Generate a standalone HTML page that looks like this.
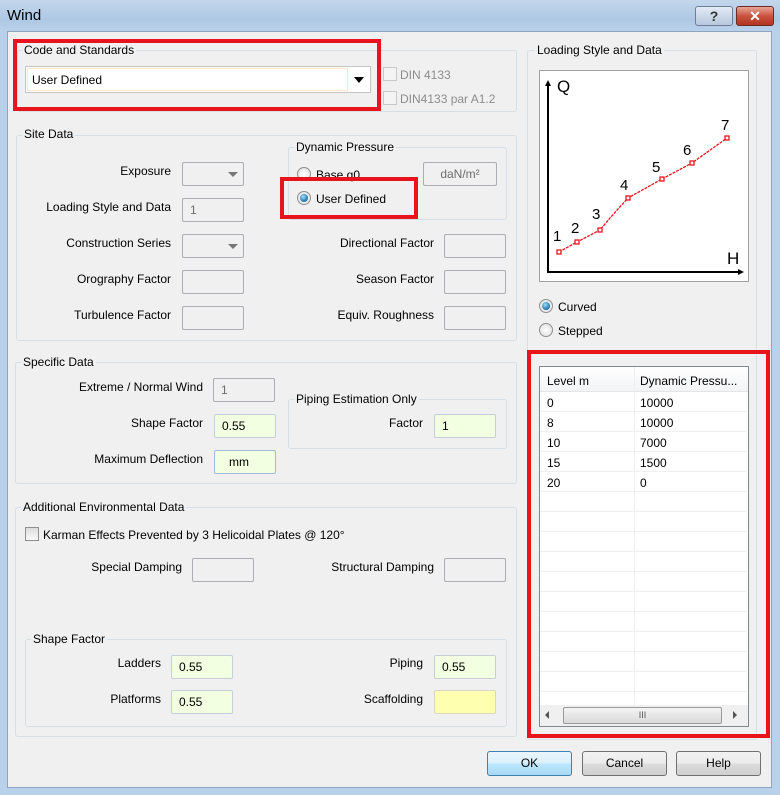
<!DOCTYPE html><html><head><style>
*{box-sizing:border-box;margin:0;padding:0}
body{width:780px;height:795px;overflow:hidden;font-family:"Liberation Sans",sans-serif;font-size:12px;color:#000;position:relative;background:#b9d1ea}
.a{position:absolute}
.win{left:7px;top:31px;width:765px;height:757px;background:#f0f0f0;border:1px solid #8ca5c0}
.title{left:0;top:0;width:780px;height:32px;background:linear-gradient(#c4d7ec,#aec8e4 60%,#bad1ea)}
.g{position:absolute;border:1px solid #d5dfe5;border-radius:3px}
.gl{position:absolute;background:#f0f0f0;padding:0 2px;white-space:nowrap}
.lb{position:absolute;white-space:nowrap;text-align:right}
.in{position:absolute;height:24px;width:62px;border:1px solid #abadb3;background:#f0f0f0;border-radius:2px;padding:4px 7px;color:#6d6d6d}
.gr{background:#f2ffe0;color:#000;border-color:#c5cfd8}
.red{position:absolute;border:4px solid #e8141c}
.btn{position:absolute;height:25px;width:85px;border:1px solid #707070;border-radius:3px;background:linear-gradient(#f2f2f2,#ebebeb 50%,#dddddd 51%,#cfcfcf);text-align:center;line-height:23px}
.rad{position:absolute;width:14px;height:14px;border-radius:50%;border:1px solid #8e8f8f;background:radial-gradient(#fff,#dcdcdc)}
.rad.on::after{content:"";position:absolute;left:2px;top:2px;width:8px;height:8px;border-radius:50%;background:radial-gradient(circle at 40% 35%,#9fe0ff,#1a6fa8 70%,#0a3e66)}
.cb{position:absolute;width:14px;height:14px;border:1px solid #8e8f8f;background:linear-gradient(#dcdcdc,#fafafa)}
.row{position:absolute;left:0;width:206px;height:20px;border-bottom:1px solid #f0f0f0}
</style></head><body>
<div class="a title"></div>
<div class="a" style="left:7px;top:7px;font-size:15px">Wind</div>
<div class="a" style="left:695px;top:6px;width:38px;height:20px;border:1px solid #6d7f95;border-radius:3px;background:linear-gradient(#e3ebf5,#b6c8dd);text-align:center;font-weight:bold;color:#333;font-size:14px;line-height:18px">?</div>
<div class="a" style="left:736px;top:6px;width:38px;height:20px;border:1px solid #6b2a22;border-radius:3px;background:linear-gradient(#e8a698,#c9543f 50%,#b33520);text-align:center;font-weight:bold;color:#fff;font-size:14px;line-height:18px">✕</div>
<div class="a win"></div>

<!-- Code and standards -->
<div class="g" style="left:17px;top:50px;width:500px;height:62px"></div>
<div class="gl" style="left:22px;top:43px">Code and Standards</div>
<div class="a" style="left:25px;top:66px;width:346px;height:27px;border:1px solid #c5c5c5;background:#fff"><div class="a" style="left:1px;top:1px;width:321px;height:23px;border:1px solid #fde6cc"></div><div class="a" style="left:6px;top:6px">User Defined</div><div class="a" style="left:328px;top:10px;border:5px solid transparent;border-top:6px solid #000"></div></div>
<div class="cb" style="left:383px;top:67px;background:#f4f4f4;border-color:#c8c8c8"></div><div class="a" style="left:400px;top:68px;color:#8d8d8d">DIN 4133</div>
<div class="cb" style="left:383px;top:91px;background:#f4f4f4;border-color:#c8c8c8"></div><div class="a" style="left:400px;top:92px;color:#8d8d8d">DIN4133 par A1.2</div>
<div class="red" style="left:13px;top:39px;width:368px;height:72px"></div>

<!-- Site data -->
<div class="g" style="left:16px;top:135px;width:501px;height:206px"></div>
<div class="gl" style="left:22px;top:127px">Site Data</div>
<div class="lb" style="right:609px;top:164px">Exposure</div>
<div class="in" style="left:182px;top:162px"><div class="a" style="left:45px;top:9px;border:5px solid transparent;border-top:5px solid #777"></div></div>
<div class="lb" style="right:609px;top:200px">Loading Style and Data</div>
<div class="in" style="left:182px;top:198px">1</div>
<div class="lb" style="right:609px;top:236px">Construction Series</div>
<div class="in" style="left:182px;top:234px"><div class="a" style="left:45px;top:9px;border:5px solid transparent;border-top:5px solid #777"></div></div>
<div class="lb" style="right:609px;top:272px">Orography Factor</div>
<div class="in" style="left:182px;top:270px"></div>
<div class="lb" style="right:609px;top:308px">Turbulence Factor</div>
<div class="in" style="left:182px;top:306px"></div>
<div class="g" style="left:288px;top:147px;width:219px;height:73px"></div>
<div class="gl" style="left:294px;top:140px">Dynamic Pressure</div>
<div class="rad" style="left:297px;top:167px"></div><div class="a" style="left:316px;top:168px">Base q0</div>
<div class="in" style="left:423px;top:162px;width:74px;text-align:center">daN/m²</div>
<div class="rad on" style="left:297px;top:191px"></div><div class="a" style="left:316px;top:192px">User Defined</div>
<div class="red" style="left:280px;top:177px;width:138px;height:42px"></div>
<div class="lb" style="right:346px;top:236px">Directional Factor</div><div class="in" style="left:444px;top:234px"></div>
<div class="lb" style="right:346px;top:272px">Season Factor</div><div class="in" style="left:444px;top:270px"></div>
<div class="lb" style="right:346px;top:308px">Equiv. Roughness</div><div class="in" style="left:444px;top:306px"></div>

<!-- Specific data -->
<div class="g" style="left:15px;top:362px;width:502px;height:122px"></div>
<div class="gl" style="left:21px;top:355px">Specific Data</div>
<div class="lb" style="right:577px;top:380px">Extreme / Normal Wind</div><div class="in" style="left:213px;top:378px">1</div>
<div class="lb" style="right:577px;top:416px">Shape Factor</div><div class="in gr" style="left:214px;top:414px">0.55</div>
<div class="lb" style="right:577px;top:452px">Maximum Deflection</div><div class="in gr" style="left:214px;top:450px;padding-left:14px;border-color:#9fbbd6">mm</div>
<div class="g" style="left:288px;top:399px;width:219px;height:50px"></div>
<div class="gl" style="left:294px;top:392px">Piping Estimation Only</div>
<div class="lb" style="right:357px;top:416px">Factor</div><div class="in gr" style="left:434px;top:414px">1</div>

<!-- Additional -->
<div class="g" style="left:15px;top:507px;width:502px;height:230px"></div>
<div class="gl" style="left:21px;top:500px">Additional Environmental Data</div>
<div class="cb" style="left:25px;top:527px"></div><div class="a" style="left:43px;top:528px">Karman Effects Prevented by 3 Helicoidal Plates @ 120°</div>
<div class="lb" style="right:598px;top:560px">Special Damping</div><div class="in" style="left:192px;top:558px"></div>
<div class="lb" style="right:346px;top:560px">Structural Damping</div><div class="in" style="left:444px;top:558px"></div>
<div class="g" style="left:25px;top:639px;width:482px;height:88px"></div>
<div class="gl" style="left:31px;top:632px">Shape Factor</div>
<div class="lb" style="right:619px;top:656px">Ladders</div><div class="in gr" style="left:171px;top:655px;width:62px">0.55</div>
<div class="lb" style="right:357px;top:656px">Piping</div><div class="in gr" style="left:434px;top:655px">0.55</div>
<div class="lb" style="right:619px;top:692px">Platforms</div><div class="in gr" style="left:171px;top:690px">0.55</div>
<div class="lb" style="right:357px;top:692px">Scaffolding</div><div class="in" style="left:434px;top:690px;background:#ffffb0;border-color:#d8d8c0"></div>

<!-- Right -->
<div class="g" style="left:527px;top:50px;width:230px;height:690px"></div>
<div class="gl" style="left:535px;top:43px">Loading Style and Data</div>
<svg class="a" style="left:539px;top:70px" width="210" height="212" viewBox="539 70 210 212">
<rect x="539.5" y="70.5" width="209" height="211" fill="#fff" stroke="#a0a0a0"/>
<g stroke="#000" stroke-width="2" fill="none"><path d="M548 84V272H741"/></g>
<path d="M545 86L548 80L551 86Z M738 269L744 272L738 275Z" fill="#000"/>
<text x="557" y="92" font-size="17" font-family="Liberation Sans">Q</text>
<text x="727" y="264" font-size="17" font-family="Liberation Sans">H</text>
<polyline points="559,252 577,242 600,230 610,218 628,198 662,179 692,163 727,138" fill="none" stroke="#e8141c" stroke-width="1.3" stroke-dasharray="3,1"/>
<g fill="#fff" stroke="#e8141c" stroke-width="1.3"><rect x="557" y="250" width="4" height="4"/><rect x="575" y="240" width="4" height="4"/><rect x="598" y="228" width="4" height="4"/><rect x="626" y="196" width="4" height="4"/><rect x="660" y="177" width="4" height="4"/><rect x="690" y="161" width="4" height="4"/><rect x="725" y="136" width="4" height="4"/></g>
<g font-size="15" font-family="Liberation Sans"><text x="553" y="241">1</text><text x="571" y="233">2</text><text x="592" y="219">3</text><text x="620" y="190">4</text><text x="652" y="172">5</text><text x="683" y="155">6</text><text x="721" y="130">7</text></g>
</svg>
<div class="rad on" style="left:539px;top:299px"></div><div class="a" style="left:558px;top:300px">Curved</div>
<div class="rad" style="left:539px;top:323px"></div><div class="a" style="left:558px;top:324px">Stepped</div>
<div class="a" style="left:539px;top:366px;width:210px;height:361px;border:1px solid #828790;background:#fff;overflow:hidden">
 <div class="a" style="left:0;top:0;width:208px;height:25px;background:linear-gradient(#fff,#f3f4f6);border-bottom:1px solid #e5e5e5"></div>
 <div class="a" style="left:94px;top:0;width:1px;height:338px;background:#efefef"></div>
 <div class="a" style="left:7px;top:7px">Level m</div><div class="a" style="left:100px;top:7px">Dynamic Pressu...</div>
 <div class="row" style="top:25px"><span class="a" style="left:7px;top:4px">0</span><span class="a" style="left:100px;top:4px">10000</span></div>
 <div class="row" style="top:45px"><span class="a" style="left:7px;top:4px">8</span><span class="a" style="left:100px;top:4px">10000</span></div>
 <div class="row" style="top:65px"><span class="a" style="left:7px;top:4px">10</span><span class="a" style="left:100px;top:4px">7000</span></div>
 <div class="row" style="top:85px"><span class="a" style="left:7px;top:4px">15</span><span class="a" style="left:100px;top:4px">1500</span></div>
 <div class="row" style="top:105px"><span class="a" style="left:7px;top:4px">20</span><span class="a" style="left:100px;top:4px">0</span></div>
 <div class="row" style="top:125px"></div><div class="row" style="top:145px"></div><div class="row" style="top:165px"></div><div class="row" style="top:185px"></div><div class="row" style="top:205px"></div><div class="row" style="top:225px"></div><div class="row" style="top:245px"></div><div class="row" style="top:265px"></div><div class="row" style="top:285px"></div><div class="row" style="top:305px"></div>
 <div class="a" style="left:0;top:338px;width:208px;height:21px;background:#f0f0f0">
  <div class="a" style="left:5px;top:6px;border:4px solid transparent;border-right:4px solid #555;border-left:0"></div>
  <div class="a" style="left:23px;top:2px;width:159px;height:17px;border:1px solid #9a9a9a;border-radius:2px;background:linear-gradient(#f4f4f4,#dadada);text-align:center;font-size:9px;line-height:15px;color:#555">III</div>
  <div class="a" style="left:193px;top:6px;border:4px solid transparent;border-left:4px solid #555;border-right:0"></div>
 </div>
</div>
<div class="red" style="left:527px;top:350px;width:243px;height:388px"></div>

<div class="btn" style="left:487px;top:751px;border-color:#3c7fb1;background:linear-gradient(#eaf6fd,#d9f0fc 50%,#bee6fd 51%,#a7d9f5)">OK</div>
<div class="btn" style="left:582px;top:751px">Cancel</div>
<div class="btn" style="left:676px;top:751px">Help</div>
</body></html>
